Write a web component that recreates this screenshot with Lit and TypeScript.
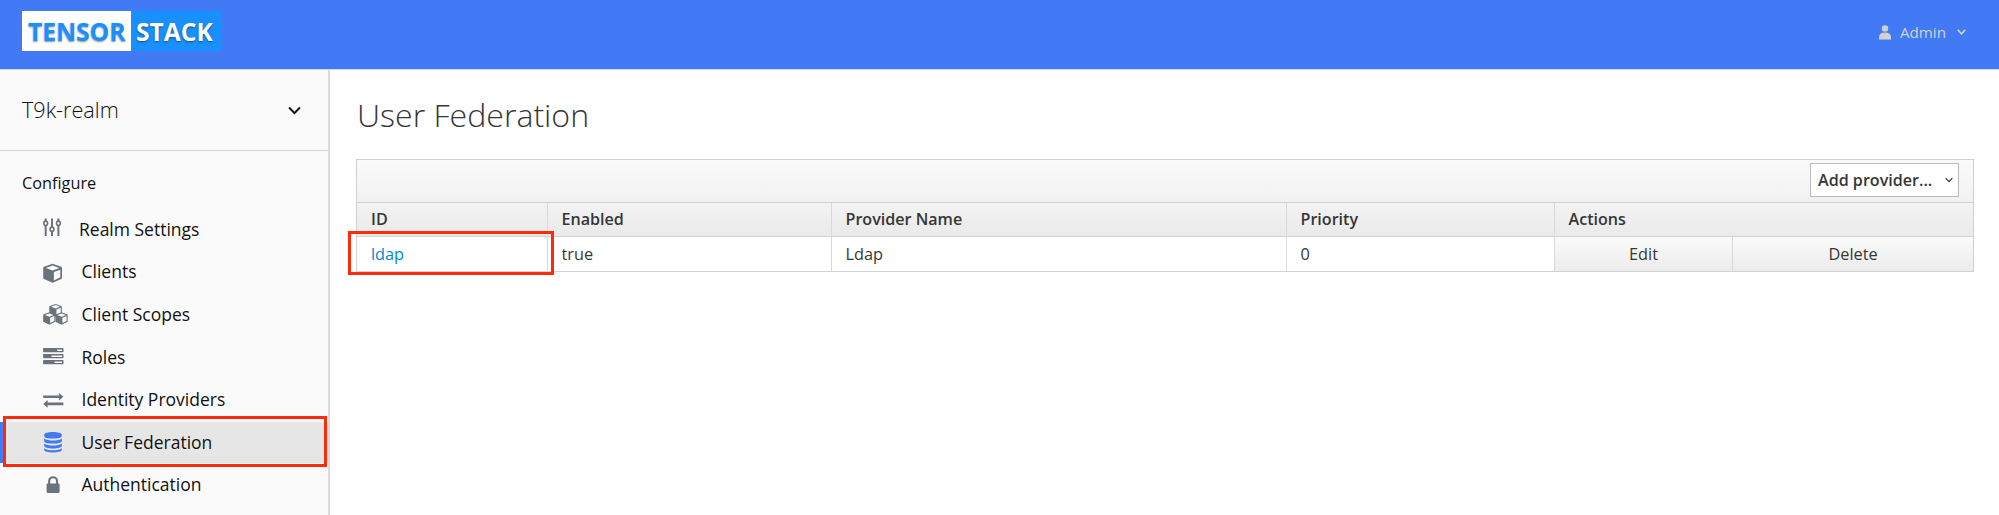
import { LitElement, html, css, svg } from "lit";
import { customElement } from "lit/decorators.js";
import { classMap } from "lit/directives/class-map.js";

const cube = (x: number, y: number, s: number) => svg`
  <g transform="translate(${x} ${y}) scale(${s})">
    <path fill="currentColor" d="M9.5 0 L18.2 3 Q19 3.4 19 4.2 V14 Q19 14.9 18.2 15.3 L10.2 19 Q9.5 19.3 8.8 19 L.8 15.3 Q0 14.9 0 14 V4.2 Q0 3.4 .8 3Z"/>
    <path fill="#fafafa" d="M9.5 1.8 L16.3 4.2 L9.5 6.8 L2.7 4.2Z M10.8 8.4 L17.3 5.9 V13.7 L10.8 16.9Z"/>
  </g>`;

const icons: Record<string, unknown> = {
  sliders: svg`<g fill="none" stroke="currentColor" stroke-width="2">
    <path d="M2.7 1V3.6M2.7 8V18.6M9 1V9.6M9 14V18.6M15.4 1V3.6M15.4 8V18.6"/>
    <g stroke-width="1.6"><ellipse cx="2.7" cy="5.8" rx="1.9" ry="2.2"/><ellipse cx="9" cy="11.8" rx="1.9" ry="2.2"/><ellipse cx="15.4" cy="5.8" rx="1.9" ry="2.2"/></g></g>`,
  cube: cube(0.2, 0.8, 0.99),
  cubes: svg`${cube(6.3, -0.6, 0.66)}${cube(0.2, 7.8, 0.64)}${cube(12.5, 7.8, 0.64)}`,
  server: svg`<path fill="currentColor" d="M.8 1H19.8Q20.5 1 20.5 1.7V4.6Q20.5 5.3 19.8 5.3H.8Q.1 5.3 .1 4.6V1.7Q.1 1 .8 1ZM.8 7H19.8Q20.5 7 20.5 7.7V10.6Q20.5 11.3 19.8 11.3H.8Q.1 11.3 .1 10.6V7.7Q.1 7 .8 7ZM.8 13H19.8Q20.5 13 20.5 13.7V16.6Q20.5 17.3 19.8 17.3H.8Q.1 17.3 .1 16.6V13.7Q.1 13 .8 13Z"/>
    <path fill="#fafafa" d="M14.2 2.5H19V3.9H14.2ZM8.5 8.5H19V9.9H8.5ZM11.5 14.5H19V15.9H11.5Z"/>`,
  exchange: svg`<path fill="currentColor" d="M.2 3.2H16V.7L20.4 4.5L16 8.3V5.8H.2ZM20.4 10.4H4.6V7.9L.2 11.7L4.6 15.5V13H20.4Z"/>`,
  database: svg`<path fill="currentColor" d="M1.2 3.3C1.2-.5 18.8-.5 18.8 3.3V4.4C18.8 8 1.2 8 1.2 4.4ZM1.2 7C4.5 9.7 15.5 9.7 18.8 7V9.4C18.8 13 1.2 13 1.2 9.4ZM1.2 12C4.5 14.7 15.5 14.7 18.8 12V14.3C18.8 17.9 1.2 17.9 1.2 14.3ZM1.2 16.8C4.5 19.5 15.5 19.5 18.8 16.8V18.2C18.8 21.8 1.2 21.8 1.2 18.2Z"/>`,
  lock: svg`<rect fill="currentColor" x="3.6" y="8" width="13" height="9.4" rx="1.1"/><path fill="none" stroke="currentColor" stroke-width="2.1" d="M6.2 9V5.6a3.9 3.9 0 0 1 7.8 0V9"/>`,
};

const items = [
  { label: "Realm Settings", icon: "sliders", top: -0.5 },
  { label: "Clients", icon: "cube", top: 2 },
  { label: "Client Scopes", icon: "cubes", top: 1.5 },
  { label: "Roles", icon: "server", top: 1 },
  { label: "Identity Providers", icon: "exchange", top: 3.2 },
  { label: "User Federation", icon: "database", top: 0.5 },
  { label: "Authentication", icon: "lock", top: 1.5 },
];

@customElement("app-root")
export class AppRoot extends LitElement {
  static styles = css`
    :host {
      display: flex;
      flex-direction: column;
      height: 515px;
      overflow: hidden;
      background: #fff;
      color: #363636;
      font: 16.3px/24px "Open Sans", sans-serif;
    }
    * { box-sizing: border-box; }
    svg { overflow: visible; }
    .bar {
      flex: none;
      display: flex;
      justify-content: space-between;
      align-items: flex-start;
      height: 70px;
      padding: 11px 33px 0 22px;
      background: #4279f5;
      border-bottom: 1px solid #c9dcf8;
    }
    .logo {
      display: flex;
      width: 199px;
      height: 39.5px;
      font-weight: 700;
      font-size: 24.6px;
      line-height: 42px;
      background: #1890ff;
      color: #fff;
      text-shadow: 0 1px 2px rgba(0, 0, 0, 0.45);
    }
    .left { width: 109px; padding-left: 6px; background: #fff; color: #1890ff; }
    .right { padding-left: 5px; }
    .user { display: flex; align-items: center; height: 42px; color: #d1d1d1; font-size: 15.2px; }
    .person { width: 12px; height: 15px; margin-right: 9px; }
    .down { width: 9px; height: 6px; margin-left: 11px; }
    .body { flex: 1; display: flex; min-height: 0; }
    .side { position: relative; flex: none; width: 330px; background: #fafafa; border-right: 2px solid #dcdcdc; color: #111; }
    .realm {
      display: flex;
      align-items: center;
      justify-content: space-between;
      height: 81px;
      padding: 0 27px 0 22px;
      border-bottom: 1px solid #d4d4d4;
      font-size: 21.6px;
      font-weight: 300;
    }
    .chev { width: 13px; height: 9px; }
    .group { padding: 20px 22px 0; font-size: 16.3px; height: 56.5px; }
    .item { display: flex; align-items: center; height: 42.6px; padding-left: 43px; font-size: 17.5px; position: relative; }
    .item svg { width: 24px; height: 21px; color: #6a727b; margin-right: 14.5px; }
    .item:first-child svg { margin-right: 12px; }
    .on::before { content: ""; position: absolute; inset: 1.5px 0 0 0; background: #e6e6e6; border-left: 4px solid #4279f5; }
    .on svg, .on span { position: relative; }
    .item.on svg { color: #4279f5; }
    .mark { position: absolute; border: 3px solid #fc2b0a; pointer-events: none; }
    .mark-nav { left: 3px; top: 346px; width: 324px; height: 51px; }
    .main { flex: 1; padding: 22px 26px 0 26px; }
    h1 { margin: 0; padding-left: 1px; font-size: 32.1px; line-height: 46px; font-weight: 300; height: 67px; }
    .table { position: relative; width: 1618px; border: 1px solid #d1d1d1; }
    .tools { display: flex; justify-content: flex-end; height: 42px; padding: 3px 14px 0; background: linear-gradient(#fafafa, #f1f1f1); }
    .select {
      display: flex;
      align-items: center;
      justify-content: space-between;
      width: 149px;
      height: 34px;
      padding: 0 5px 0 7px;
      border: 1px solid #bbb;
      background: #fff;
      font-weight: 600;
      font-size: 16.1px;
    }
    .select svg { width: 8px; height: 6px; }
    .row { display: grid; grid-template-columns: 191px 284px 455px 268px 1fr; }
    .head { height: 35px; background: linear-gradient(#f3f3f3, #eaeaea); border: solid #d1d1d1; border-width: 1px 0; font-weight: 600; font-size: 16.1px; }
    .head .cell { line-height: 32px; }
    .cell { padding-left: 14px; line-height: 34px; border-right: 1px solid #d9d9d9; }
    .cell:last-child { border-right: 0; }
    .cell + .cell { padding-left: 13.5px; }
    .data { height: 34px; }
    .link { color: #0088ce; font-weight: 500; }
    .actions { display: grid; grid-template-columns: 178px 1fr; background: linear-gradient(#fafafa, #ececec); text-align: center; }
    .act { line-height: 34px; }
    .act:first-child { border-right: 1px solid #d9d9d9; }
    .mark-row { left: -9px; top: 71px; width: 206px; height: 44px; }
  `;

  render() {
    const chevron = (cls: string, w: number) => html`<svg class=${cls} viewBox="0 0 12 8"><path fill="none" stroke="currentColor" stroke-width=${w} d="M1 1.2L6 6.4L11 1.2"/></svg>`;
    return html`
      <header class="bar">
        <div class="logo"><div class="left">TENSOR</div><div class="right">STACK</div></div>
        <div class="user">
          <svg class="person" viewBox="0 0 12 15"><path fill="currentColor" d="M6 .2a3.2 3.2 0 1 1 0 6.4a3.2 3.2 0 0 1 0-6.4ZM0 14.5V12.4Q0 7.6 6 7.6T12 12.4V14.5Z"/></svg>
          <span>Admin</span>${chevron("down", 2.1)}
        </div>
      </header>
      <div class="body">
        <nav class="side">
          <div class="realm"><span>T9k-realm</span>${chevron("chev", 1.8)}</div>
          <div class="group">Configure</div>
          <div class="list">
            ${items.map((i) => html`<div class=${classMap({ item: true, on: i.icon === "database" })}>
              <svg viewBox="0 0 24 21"><g transform="translate(0 ${i.top})">${icons[i.icon]}</g></svg><span>${i.label}</span></div>`)}
          </div>
          <div class="mark mark-nav"></div>
        </nav>
        <main class="main">
          <h1>User Federation</h1>
          <section class="table">
            <div class="tools"><div class="select"><span>Add provider...</span>${chevron("", 1.9)}</div></div>
            <div class="row head">
              ${["ID", "Enabled", "Provider Name", "Priority", "Actions"].map((t) => html`<div class="cell">${t}</div>`)}
            </div>
            <div class="row data">
              <div class="cell"><span class="link">ldap</span></div>
              <div class="cell">true</div>
              <div class="cell">Ldap</div>
              <div class="cell">0</div>
              <div class="actions"><div class="act">Edit</div><div class="act">Delete</div></div>
            </div>
            <div class="mark mark-row"></div>
          </section>
        </main>
      </div>`;
  }
}
